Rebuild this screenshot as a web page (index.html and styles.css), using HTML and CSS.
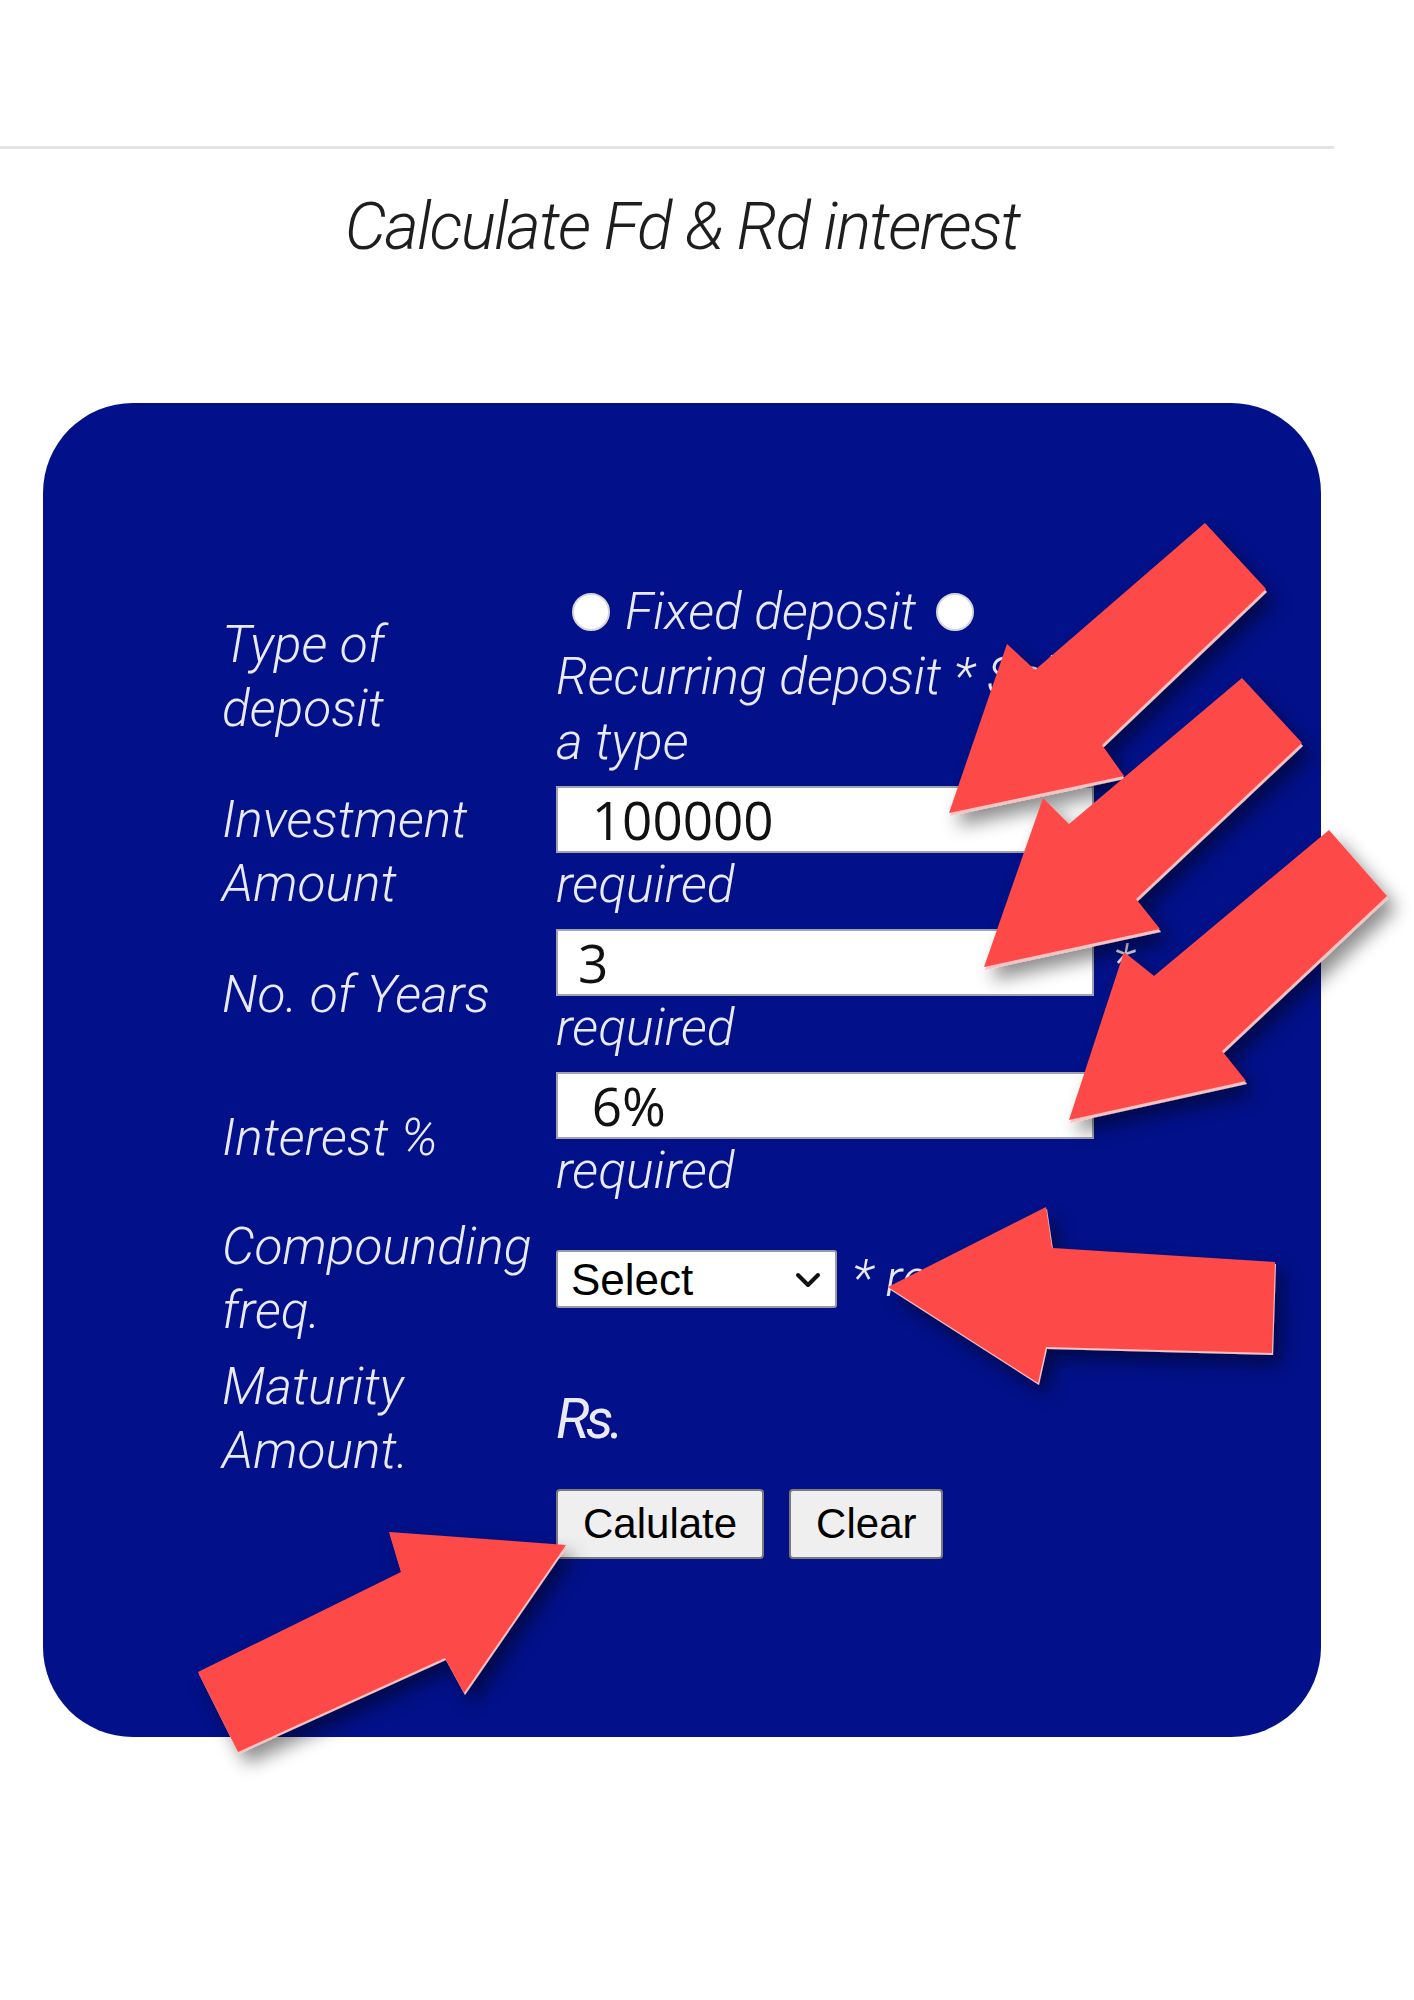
FILE: index.html
```html
<!DOCTYPE html>
<html lang="en">
<head>
<meta charset="utf-8">
<title>Calculate Fd &amp; Rd interest</title>
<link rel="stylesheet" href="styles.css">
</head>
<body>
<div class="page">
  <div class="topbar"></div>
  <h1 class="title">Calculate Fd &amp; Rd interest</h1>
  <form class="card">
    <div class="form">
      <div class="lbl">Type of<br>deposit</div>
      <div class="radios">
        <div class="radio-line">
          <input type="radio" name="t" class="radio first">
          <span>Fixed deposit</span>
          <input type="radio" name="t" class="radio second">
        </div>
        <div class="txt">Recurring deposit * Select</div>
        <div class="txt">a type</div>
      </div>

      <div class="lbl">Investment<br>Amount</div>
      <div class="val">
        <div class="field"><input class="input" type="text" value=" 100000"><span class="star">*</span></div>
        <div class="req">required</div>
      </div>

      <div class="lbl">No. of Years</div>
      <div class="val">
        <div class="field"><input class="input" type="text" value="3"><span class="star">*</span></div>
        <div class="req">required</div>
      </div>

      <div class="lbl">Interest %</div>
      <div class="val">
        <div class="field"><input class="input" type="text" value=" 6%"><span class="star">*</span></div>
        <div class="req">required</div>
      </div>

      <div class="lbl">Compounding<br>freq.</div>
      <div class="selrow">
        <div class="selwrap">
          <select class="select"><option>Select</option><option>Monthly</option><option>Quarterly</option><option>Yearly</option></select>
          <svg class="chev" width="26" height="16" viewBox="0 0 26 16"><path d="M3 3 L13 13 L23 3" fill="none" stroke="#111" stroke-width="4" stroke-linecap="round" stroke-linejoin="round"/></svg>
        </div>
        <span class="selnote">* required</span>
      </div>

      <div class="lbl">Maturity<br>Amount.</div>
      <div class="rs">Rs.</div>

      <div class="lbl"></div>
      <div class="btns">
        <button type="button" class="btn">Calulate</button>
        <button type="button" class="btn">Clear</button>
      </div>
    </div>
  </form>
</div>

<svg class="arrows" width="1414" height="2000" viewBox="0 0 1414 2000">
  <defs>
    <filter id="sh" filterUnits="userSpaceOnUse" x="0" y="0" width="1414" height="2000">
      <feDropShadow dx="8" dy="10" stdDeviation="9" flood-color="#000" flood-opacity="0.45"/>
    </filter>
  </defs>
  <g filter="url(#sh)">
    <polygon class="edge" points="949,813 1007,644 1035,670 1205,523 1266,589 1102,745 1124,776" transform="translate(1,3)"/>
    <polygon class="arrow" points="949,813 1007,644 1035,670 1205,523 1266,589 1102,745 1124,776"/>
  </g>
  <g filter="url(#sh)">
    <polygon class="edge" points="984,967 1043,798 1069,824 1242,678 1302,743 1136,899 1160,929" transform="translate(1,3)"/>
    <polygon class="arrow" points="984,967 1043,798 1069,824 1242,678 1302,743 1136,899 1160,929"/>
  </g>
  <g filter="url(#sh)">
    <polygon class="edge" points="1069,1120 1124,952 1154,976 1329,830 1387,896 1222,1051 1246,1081" transform="translate(1,3)"/>
    <polygon class="arrow" points="1069,1120 1124,952 1154,976 1329,830 1387,896 1222,1051 1246,1081"/>
  </g>
  <g filter="url(#sh)">
    <polygon class="edge" points="888,1287 1046,1207 1052,1248 1275,1262 1272,1353 1046,1347 1038,1383" transform="translate(1,2)"/>
    <polygon class="arrow" points="888,1287 1046,1207 1052,1248 1275,1262 1272,1353 1046,1347 1038,1383"/>
  </g>
  <g filter="url(#sh)">
    <polygon class="edge" points="566,1545 389,1532 401,1572 198,1672 238,1752 445,1658 464,1693" transform="translate(1,2)"/>
    <polygon class="arrow" points="566,1545 389,1532 401,1572 198,1672 238,1752 445,1658 464,1693"/>
  </g>
</svg>
</body>
</html>
```

FILE: styles.css
```css
html {
  background: #ffffff;
}

body {
  margin: 0;
  min-height: 2000px;
  background: #ffffff;
  position: relative;
  font-family: Roboto, "Liberation Sans", sans-serif;
}

.page {
  width: 1364px;
}

.topbar {
  width: 1334px;
  height: 146px;
  border-bottom: 3px solid #e4e4e4;
}

.title {
  margin: 38px 0 0;
  text-align: center;
  font-family: Roboto, "Liberation Sans", sans-serif;
  font-style: italic;
  font-weight: 300;
  font-size: 66px;
  line-height: 80px;
  letter-spacing: -1.8px;
  color: #1e1e1e;
}

.card {
  margin: 136px 0 0 43px;
  width: 1278px;
  height: 1334px;
  box-sizing: border-box;
  padding: 176px 0 0 179px;
  background: #021089;
  border-radius: 90px;
}

.form {
  display: grid;
  grid-template-columns: 334px 740px;
  row-gap: 12px;
  align-items: center;
  color: #e9eaf6;
  font-family: Roboto, "Liberation Sans", sans-serif;
  font-style: italic;
  font-weight: 300;
  font-size: 51.5px;
}

.lbl {
  line-height: 64px;
  white-space: nowrap;
}

.radios .txt {
  line-height: 65px;
  white-space: nowrap;
}

.radio-line {
  display: flex;
  align-items: center;
  height: 65px;
  white-space: nowrap;
}

.radio {
  appearance: none;
  -webkit-appearance: none;
  width: 38px;
  height: 38px;
  box-sizing: border-box;
  border-radius: 50%;
  background: #ffffff;
  border: 2px solid #d6d6d6;
  margin: 0;
}

.radio.first {
  margin: 0 15px 0 16px;
}

.radio.second {
  margin: 0 0 0 20px;
}

.field {
  display: flex;
  align-items: flex-start;
}

.input {
  width: 538px;
  height: 67px;
  box-sizing: border-box;
  border: 2px solid #a3a3ad;
  padding: 0 0 0 20px;
  margin: 0;
  font-family: "Open Sans", "Noto Sans", sans-serif;
  font-size: 53px;
  font-style: normal;
  color: #111111;
  background: #ffffff;
  outline: none;
}

.star {
  margin-left: 19px;
  line-height: 67px;
}

.req {
  line-height: 64px;
}

.selrow {
  display: flex;
  align-items: center;
}

.selwrap {
  position: relative;
  display: inline-block;
}

.select {
  appearance: none;
  -webkit-appearance: none;
  display: block;
  width: 281px;
  height: 58px;
  box-sizing: border-box;
  border: 2px solid #9a9aa2;
  border-radius: 3px;
  background: #ffffff;
  padding: 0 0 0 13px;
  font-family: "Liberation Sans", Arial, sans-serif;
  font-size: 44px;
  color: #000000;
}

.chev {
  position: absolute;
  right: 16px;
  top: 22px;
  pointer-events: none;
}

.selnote {
  margin-left: 15px;
  line-height: 58px;
  white-space: nowrap;
}

.rs {
  font-style: italic;
  font-weight: 400;
  font-size: 56px;
  line-height: 64px;
  letter-spacing: -4px;
}

.btns {
  display: flex;
  gap: 25px;
  margin-top: -6px;
}

.btn {
  height: 70px;
  padding: 0 25px;
  font-family: "Liberation Sans", Arial, sans-serif;
  font-size: 42px;
  color: #000000;
  background: #efefef;
  border: 2px solid #7a7a7a;
  border-radius: 4px;
}

.arrows {
  position: absolute;
  left: 0;
  top: 0;
  overflow: visible;
  pointer-events: none;
}

.arrow {
  fill: #fe4a4a;
}

.edge {
  fill: #f7c4c4;
}
```
